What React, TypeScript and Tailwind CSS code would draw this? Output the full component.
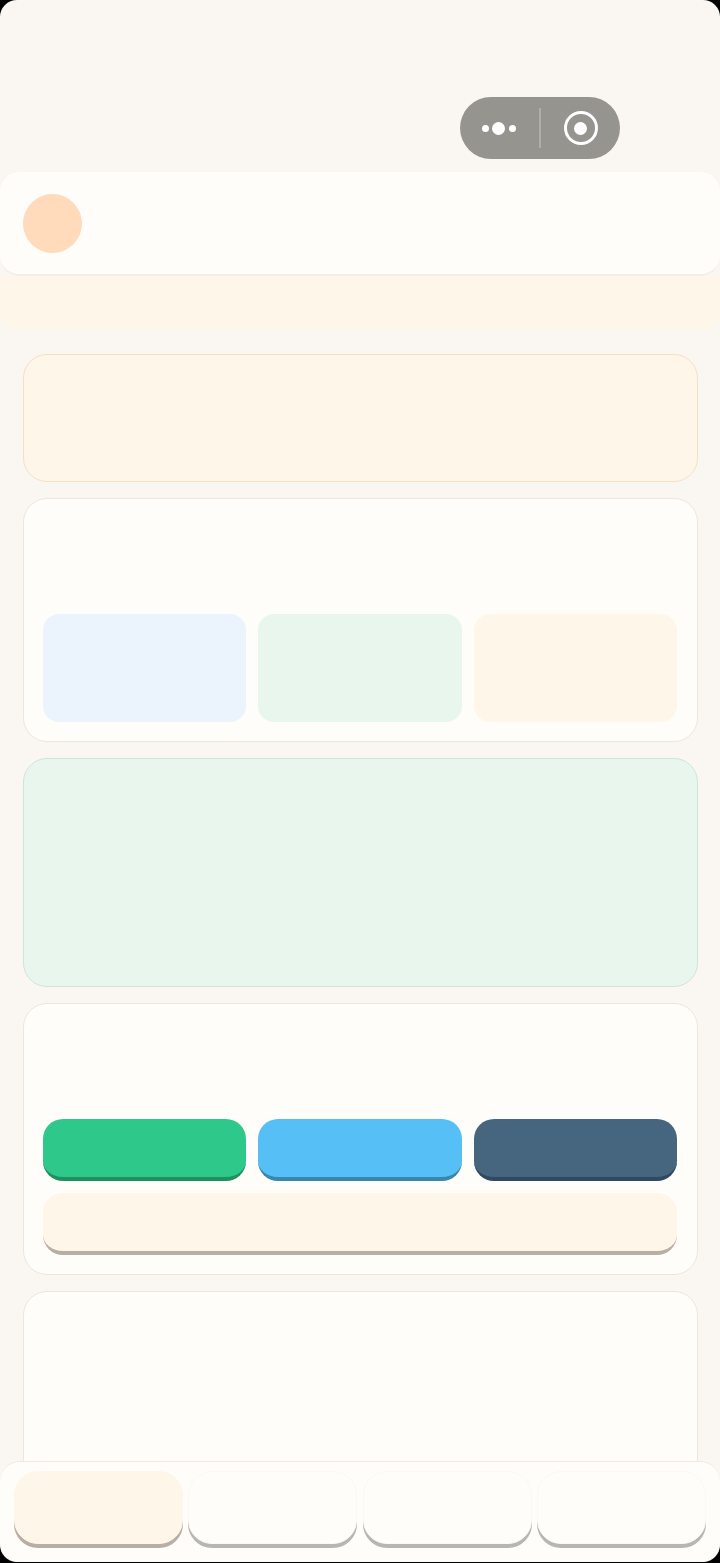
export default function App() {
  const tile = "h-[108px] flex-1 rounded-[16px]";
  const card = "mx-[22.5px] rounded-[24px] border border-[#eee6da] bg-[#fffdf9] px-[19.5px]";
  const btn = "h-[62px] flex-1 rounded-[20px] border-b-4";
  const tab = "h-[73px] w-[169px] rounded-[24px] border";
  return (
    <div className="h-[1563px] overflow-hidden bg-black">
      <div className="relative h-[1562px] overflow-hidden rounded-[17px] bg-[#faf7f2]">
        <div className="flex h-[172px] justify-end pt-[97px] pr-[100px]">
          <div className="flex h-[62px] w-[160px] items-center rounded-full bg-[#96948f]">
            <div className="flex w-[79px] items-center justify-center gap-[3.5px] pr-[2px]">
              <span className="h-[7px] w-[7px] rounded-full bg-white" />
              <span className="h-[13px] w-[13px] rounded-full bg-white" />
              <span className="h-[7px] w-[7px] rounded-full bg-white" />
            </div>
            <div className="h-[40px] w-[2px] bg-[#b0aeaa]" />
            <div className="flex flex-1 items-center justify-center">
              <div className="flex h-[34px] w-[34px] items-center justify-center rounded-full border-[3.5px] border-white">
                <span className="h-[13px] w-[13px] rounded-full bg-white" />
              </div>
            </div>
          </div>
        </div>
        <div className="flex h-[104px] items-center rounded-[20px] border-b-2 border-[#f4eee5] bg-[#fffdf9] pl-[23px]">
          <div className="h-[59px] w-[59px] rounded-full bg-[#ffdabb]" />
        </div>
        <div className="h-[54px] rounded-b-[16px] bg-[#fff6ea]" />
        <div className="flex flex-col gap-[16px] pt-[24px]">
          <div className="mx-[22.5px] h-[128px] rounded-[24px] border border-[#f6e0c3] bg-[#fff6ea]" />
          <div className={`${card} flex h-[244px] items-end gap-[12px] pb-[19px]`}>
            <div className={`${tile} bg-[#ebf4fc]`} />
            <div className={`${tile} bg-[#e9f6ee]`} />
            <div className={`${tile} bg-[#fff6ea]`} />
          </div>
          <div className="mx-[22.5px] h-[229px] rounded-[24px] border border-[#cde6d8] bg-[#e9f6ee]" />
          <div className={`${card} flex h-[272px] flex-col justify-end gap-[12px] pb-[19px]`}>
            <div className="flex gap-[12px]">
              <div className={`${btn} border-[#1f9161] bg-[#2ec88a]`} />
              <div className={`${btn} border-[#3a87ad] bg-[#56c0f6]`} />
              <div className={`${btn} border-[#2f4a60] bg-[#46667f]`} />
            </div>
            <div className="flex">
              <div className={`${btn} border-[#b8aea3] bg-[#fff6ea]`} />
            </div>
          </div>
          <div className={`${card} h-[300px]`} />
        </div>
        <div className="absolute inset-x-0 bottom-0 flex h-[101px] justify-between rounded-[20px] border-t border-[#efe9e0] bg-[#fffdf9] px-[14px] pt-[9px]">
          <div className={`${tab} border-[#fff6ea] bg-[#fff6ea] shadow-[0_4px_0_#b8aea3]`} />
          <div className={`${tab} border-[#fbf9f5] bg-[#fffdf9] shadow-[0_4px_0_#b8b6b1]`} />
          <div className={`${tab} border-[#fbf9f5] bg-[#fffdf9] shadow-[0_4px_0_#b8b6b1]`} />
          <div className={`${tab} border-[#fbf9f5] bg-[#fffdf9] shadow-[0_4px_0_#b8b6b1]`} />
        </div>
      </div>
    </div>
  );
}
